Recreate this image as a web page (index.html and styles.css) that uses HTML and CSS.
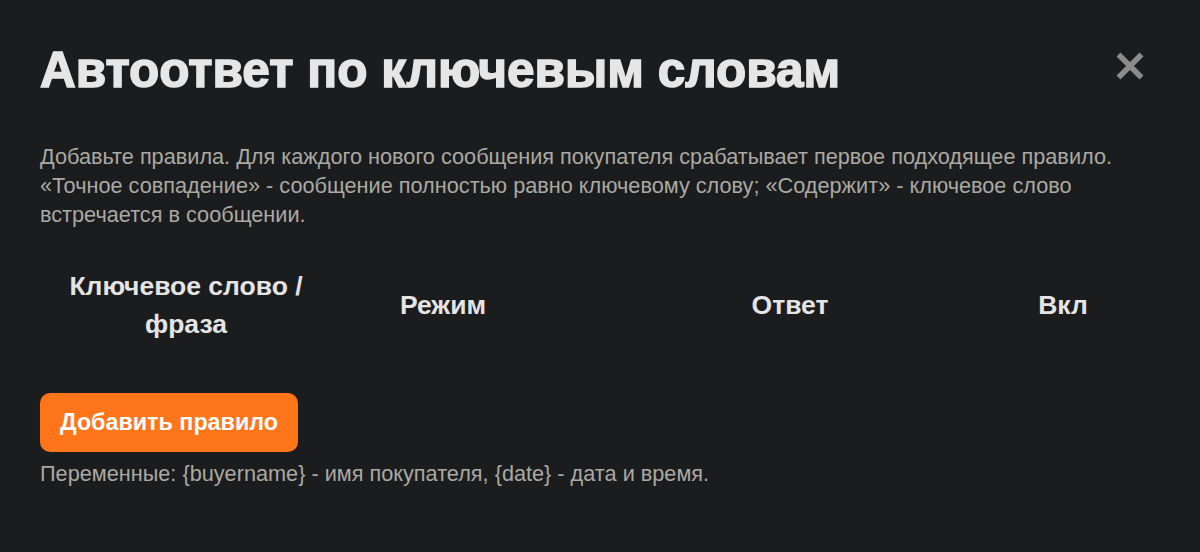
FILE: index.html
```html
<!DOCTYPE html>
<html lang="ru">
<head>
<meta charset="utf-8">
<title>Автоответ по ключевым словам</title>
<link rel="stylesheet" href="styles.css">
</head>
<body>
<div class="modal">
  <div class="modal-head">
    <h1 class="title">Автоответ по ключевым словам</h1>
    <button class="close" aria-label="Закрыть">
      <svg width="30" height="30" viewBox="0 0 30 30"><path d="M3.5 3.5 L26.5 26.5 M26.5 3.5 L3.5 26.5" stroke="#8c8c8c" stroke-width="5.5" stroke-linecap="butt"/></svg>
    </button>
  </div>
  <p class="desc">Добавьте правила. Для каждого нового сообщения покупателя срабатывает первое подходящее правило. «Точное совпадение» - сообщение полностью равно ключевому слову; «Содержит» - ключевое слово встречается в сообщении.</p>
  <div class="table-head">
    <div class="th c1">Ключевое слово / фраза</div>
    <div class="th c2">Режим</div>
    <div class="th c3">Ответ</div>
    <div class="th c4">Вкл</div>
  </div>
  <button class="add-btn">Добавить правило</button>
  <p class="vars">Переменные: {buyername} - имя покупателя, {date} - дата и время.</p>
</div>
</body>
</html>
```
FILE: styles.css
```css
html, body {
  margin: 0;
  padding: 0;
  background: #1b1c1e;
}
.modal {
  width: 1200px;
  height: 552px;
  box-sizing: border-box;
  padding: 40px 40px 0 40px;
  background: #1b1c1e;
  font-family: "Liberation Sans", Arial, sans-serif;
}
.modal-head {
  display: flex;
  justify-content: space-between;
  align-items: flex-start;
}
.title {
  margin: 0;
  font-family: "Liberation Sans", Arial, sans-serif;
  font-weight: 700;
  font-size: 49.5px;
  line-height: 60px;
  color: #e6e6e6;
  -webkit-text-stroke: 1.5px #e6e6e6;
}
.close {
  background: none;
  border: 0;
  padding: 0;
  margin: 11px 15px 0 0;
  width: 30px;
  height: 30px;
  cursor: pointer;
}
.close svg { display: block; }
.desc {
  margin: 42px 0 0 0;
  font-size: 21.7px;
  line-height: 29px;
  color: #aaa9a3;
}
.table-head {
  display: grid;
  grid-template-columns: 292px 222px 472px 74px;
  margin-top: 38px;
  align-items: center;
}
.th {
  text-align: center;
  font-family: "Liberation Sans", Arial, sans-serif;
  font-weight: 700;
  font-size: 26.5px;
  line-height: 38px;
  color: #e4e4e4;
  padding: 0 20px;
}
.th.c1 { padding: 0 24px; }
.th.c4 { padding: 0; }
.add-btn {
  display: block;
  margin-top: 50px;
  height: 59px;
  padding: 0 20px;
  border: 0;
  border-radius: 10px;
  background: #ff751a;
  color: #ffffff;
  font-family: "Liberation Sans", Arial, sans-serif;
  font-weight: 700;
  font-size: 23.3px;
}
.vars {
  margin: 10px 0 0 0;
  font-size: 21.7px;
  line-height: 24px;
  color: #aaa9a3;
}
```
